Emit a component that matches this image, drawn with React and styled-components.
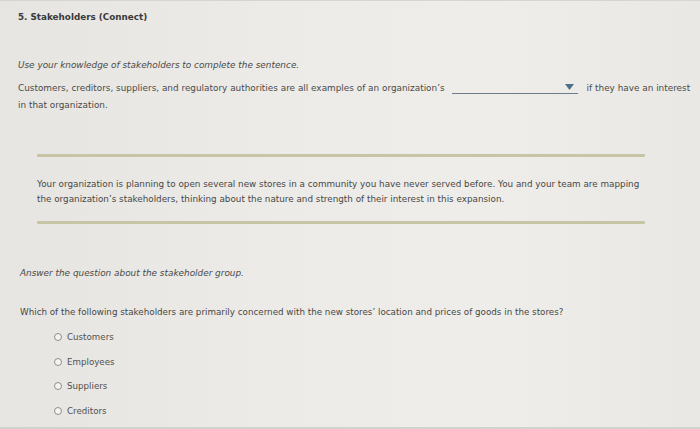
import React from "react";
import styled, { createGlobalStyle } from "styled-components";

const GlobalStyle = createGlobalStyle`
  html, body {
    margin: 0;
    padding: 0;
    background: #e9e8e4;
  }
  body {
    font-family: "DejaVu Sans", Verdana, sans-serif;
    color: #444;
  }
`;

const Page = styled.div`
  width: 700px;
  height: 429px;
  box-sizing: border-box;
  border-top: 1px solid #d6d5d1;
  border-bottom: 2px solid #d3d2ce;
  background: linear-gradient(90deg, #e6e5e1 0%, #ecebe7 40%, #eeede9 70%, #e9e8e4 100%);
  overflow: hidden;
  padding: 9px 0 0 18px;
`;

const Title = styled.h2`
  margin: 0;
  font-size: 8.8px;
  font-weight: bold;
  color: #3a3a3a;
  line-height: 14px;
`;

const Instruction = styled.p`
  margin: ${(p) => p.$top}px 0 0 ${(p) => p.$left || 0}px;
  font-size: 8.9px;
  font-style: italic;
  color: #4a4a4a;
  line-height: 12px;
`;

const Sentence = styled.div`
  margin-top: 9px;
  width: 682px;
  font-size: 8.9px;
  line-height: 17px;
  color: #4a4a4a;
`;

const Select = styled.span`
  display: inline-block;
  position: relative;
  width: 126px;
  height: 10px;
  margin: 0 9px 0 7px;
  border-bottom: 1px solid #6d7c8a;
  vertical-align: -3px;

  svg {
    position: absolute;
    right: 4px;
    top: 1px;
  }
`;

const Scenario = styled.section`
  margin: 40px 0 0 19px;
  width: 608px;
`;

const Rule = styled.div`
  height: 3px;
  background: #c8c5a6;
  border-radius: 1px;
`;

const ScenarioText = styled.p`
  margin: 20px 0 14px;
  font-size: 8.8px;
  line-height: 15px;
  color: #474747;
`;

const Question = styled.p`
  margin: 27px 0 0 2px;
  font-size: 8.75px;
  line-height: 12px;
  color: #474747;
`;

const Options = styled.ul`
  list-style: none;
  margin: 13px 0 0 36px;
  padding: 0;
  display: flex;
  flex-direction: column;
  gap: 12.5px;
`;

const Option = styled.li`
  display: flex;
  align-items: center;
  gap: 5px;
  font-size: 8.7px;
  line-height: 12px;
  color: #505050;
`;

const Radio = styled.span`
  width: 6px;
  height: 6px;
  border: 1px solid #8e8e8e;
  border-radius: 50%;
  background: #f4f4f2;
`;

const options = ["Customers", "Employees", "Suppliers", "Creditors"];

export default function App() {
  return (
    <>
      <GlobalStyle />
      <Page>
        <Title>5. Stakeholders (Connect)</Title>
        <Instruction $top={35}>
          Use your knowledge of stakeholders to complete the sentence.
        </Instruction>
        <Sentence>
          Customers, creditors, suppliers, and regulatory authorities are all examples of an organization’s
          <Select>
            <svg width="9" height="6" viewBox="0 0 9 6">
              <path d="M0 0 H9 L4.5 6 Z" fill="#4f6f8f" />
            </svg>
          </Select>
          if they have an interest in that organization.
        </Sentence>
        <Scenario>
          <Rule />
          <ScenarioText>
            Your organization is planning to open several new stores in a community you have never served before. You and your team are mapping the organization’s stakeholders, thinking about the nature and strength of their interest in this expansion.
          </ScenarioText>
          <Rule />
        </Scenario>
        <Instruction $top={43} $left={2}>
          Answer the question about the stakeholder group.
        </Instruction>
        <Question>
          Which of the following stakeholders are primarily concerned with the new stores’ location and prices of goods in the stores?
        </Question>
        <Options>
          {options.map((o) => (
            <Option key={o}>
              <Radio />
              {o}
            </Option>
          ))}
        </Options>
      </Page>
    </>
  );
}
